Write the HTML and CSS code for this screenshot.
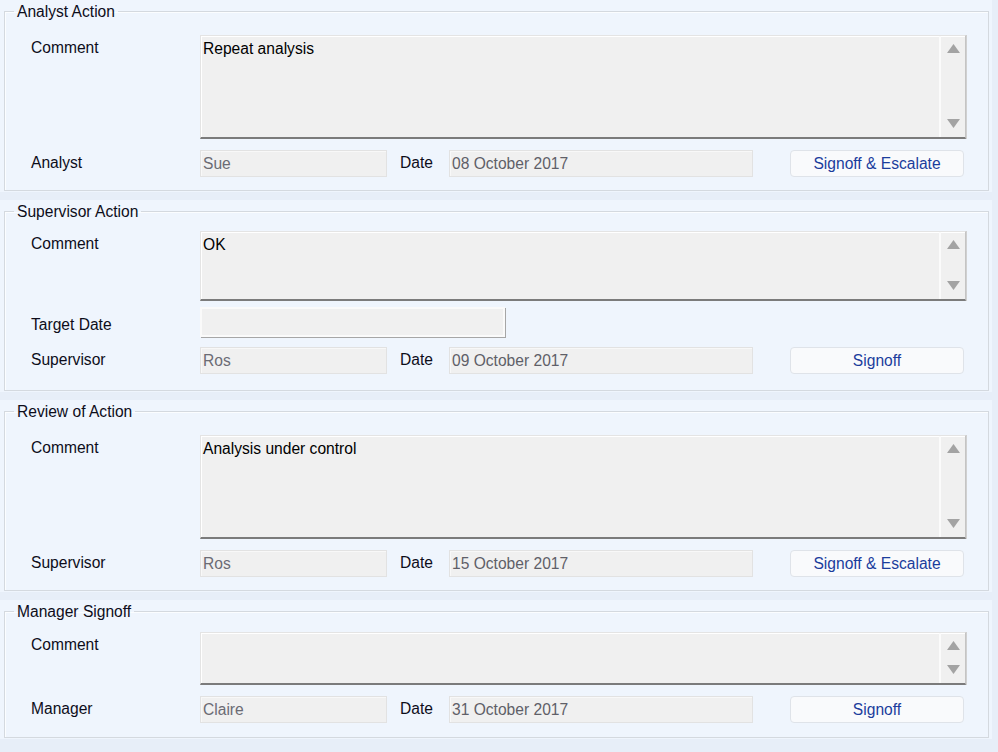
FILE: index.html
```html
<!DOCTYPE html>
<html lang="en">
  <head>
    <meta charset="UTF-8" />
    <title>Action Signoff</title>
    <link rel="stylesheet" href="styles.css">
  </head>
  <body>
    <div class="panel">
      <fieldset class="group">
        <legend>Analyst Action</legend>
        <div class="group-body">
          <div class="line">
            <span class="label">Comment</span>
            <div class="memo tall">
              <span class="memo-text">Repeat analysis</span>
              <div class="scroll">
                <svg width="13" height="9" viewBox="0 0 13 9"><polygon points="0,9 6.5,0 13,9" /></svg>
                <svg width="13" height="9" viewBox="0 0 13 9"><polygon points="0,0 13,0 6.5,9" /></svg>
              </div>
            </div>
          </div>
          <div class="line">
            <span class="label">Analyst</span>
            <div class="field name">Sue</div>
            <span class="date-label">Date</span>
            <div class="field date">08 October 2017</div>
            <button class="btn">Signoff &amp; Escalate</button>
          </div>
        </div>
      </fieldset>
    </div>

    <div class="panel supervisor">
      <fieldset class="group">
        <legend>Supervisor Action</legend>
        <div class="group-body">
          <div class="line">
            <span class="label">Comment</span>
            <div class="memo short">
              <span class="memo-text">OK</span>
              <div class="scroll">
                <svg width="13" height="9" viewBox="0 0 13 9"><polygon points="0,9 6.5,0 13,9" /></svg>
                <svg width="13" height="9" viewBox="0 0 13 9"><polygon points="0,0 13,0 6.5,9" /></svg>
              </div>
            </div>
          </div>
          <div class="line target">
            <span class="label">Target Date</span>
            <div class="field blank"></div>
          </div>
          <div class="line">
            <span class="label">Supervisor</span>
            <div class="field name">Ros</div>
            <span class="date-label">Date</span>
            <div class="field date">09 October 2017</div>
            <button class="btn">Signoff</button>
          </div>
        </div>
      </fieldset>
    </div>

    <div class="panel">
      <fieldset class="group">
        <legend>Review of Action</legend>
        <div class="group-body">
          <div class="line">
            <span class="label">Comment</span>
            <div class="memo tall">
              <span class="memo-text">Analysis under control</span>
              <div class="scroll">
                <svg width="13" height="9" viewBox="0 0 13 9"><polygon points="0,9 6.5,0 13,9" /></svg>
                <svg width="13" height="9" viewBox="0 0 13 9"><polygon points="0,0 13,0 6.5,9" /></svg>
              </div>
            </div>
          </div>
          <div class="line">
            <span class="label">Supervisor</span>
            <div class="field name">Ros</div>
            <span class="date-label">Date</span>
            <div class="field date">15 October 2017</div>
            <button class="btn">Signoff &amp; Escalate</button>
          </div>
        </div>
      </fieldset>
    </div>

    <div class="panel manager">
      <fieldset class="group">
        <legend>Manager Signoff</legend>
        <div class="group-body">
          <div class="line">
            <span class="label">Comment</span>
            <div class="memo mini">
              <span class="memo-text"></span>
              <div class="scroll">
                <svg width="13" height="9" viewBox="0 0 13 9"><polygon points="0,9 6.5,0 13,9" /></svg>
                <svg width="13" height="9" viewBox="0 0 13 9"><polygon points="0,0 13,0 6.5,9" /></svg>
              </div>
            </div>
          </div>
          <div class="line">
            <span class="label">Manager</span>
            <div class="field name">Claire</div>
            <span class="date-label">Date</span>
            <div class="field date">31 October 2017</div>
            <button class="btn">Signoff</button>
          </div>
        </div>
      </fieldset>
    </div>
  </body>
</html>
```

FILE: styles.css
```css
body {
  margin: 0;
  background-color: #e7eef8;
  font-family: "Liberation Sans", Arial, sans-serif;
  font-size: 15.6px;
  color: #0d0d1a;
}

.panel {
  width: 992px;
  box-sizing: border-box;
  background-color: #eff5fd;
  padding: 0 3px 1px 4px;
  margin-bottom: 8px;
}

.group {
  margin: 0;
  padding: 0;
  min-width: 0;
  border: 1px solid #d4d9df;
  box-shadow: inset 1px 1px 0 #fbfdff;
}

.group legend {
  margin-left: 9px;
  padding: 2px 3px 0;
  line-height: 20px;
}

.group-body {
  padding: 13px 22px 13px 26px;
}

.supervisor .group-body {
  padding-top: 9px;
  padding-bottom: 16px;
}

.manager .group-body {
  padding-top: 10px;
  padding-bottom: 14px;
}

.line {
  display: flex;
  align-items: flex-start;
}

.line + .line {
  margin-top: 11px;
}

.line.target {
  margin-top: 6px;
}

.line.target + .line {
  margin-top: 10px;
}

.label {
  width: 169px;
  flex: none;
  line-height: 26px;
}

.target .label {
  margin-top: 5px;
  line-height: 25px;
}

/* comment boxes */
.memo {
  flex: 1;
  display: flex;
  box-sizing: border-box;
  background-color: #f0f0f0;
  border: 1px solid #e4e4e4;
  border-right-color: #c4c4c4;
  border-bottom: 2px solid #7b7b7b;
  box-shadow: inset 1px 1px 0 #ffffff, 1px 0 0 #d0d0d0;
}

.memo.tall {
  height: 104px;
}

.memo.short {
  height: 70px;
}

.memo.mini {
  height: 53px;
}

.memo-text {
  flex: 1;
  padding: 3px 2px;
  line-height: 20px;
  color: #000;
}

.scroll {
  width: 24px;
  border-left: 2px solid #fbfbfb;
  display: flex;
  flex-direction: column;
  justify-content: space-between;
  align-items: center;
  padding: 8px 0 9px;
}

.scroll svg {
  display: block;
  fill: #a3a3a3;
}

/* read-only fields */
.field {
  height: 27px;
  box-sizing: border-box;
  background-color: #f0f0f0;
  border: 1px solid #e2e2e2;
  box-shadow: inset 1px 1px 0 #f8f8f8;
  color: #6b6b74;
  padding: 0 2px;
  line-height: 25px;
  white-space: nowrap;
}

.field.name {
  width: 187px;
}

.field.date {
  width: 304px;
  color: #5f5f68;
}

.field.blank {
  width: 305px;
  height: 30px;
  border: 2px solid #fafafa;
  box-shadow: 1px 1px 0 #a6a6a6;
}

.date-label {
  width: 49px;
  margin-left: 13px;
  line-height: 26px;
}

.btn {
  width: 174px;
  height: 27px;
  margin-left: 37px;
  background-color: #f9fafc;
  border: 1px solid #dfe3e9;
  border-radius: 4px;
  color: #1b3d9c;
  font-family: inherit;
  font-size: 15.6px;
  padding: 0;
}
```
